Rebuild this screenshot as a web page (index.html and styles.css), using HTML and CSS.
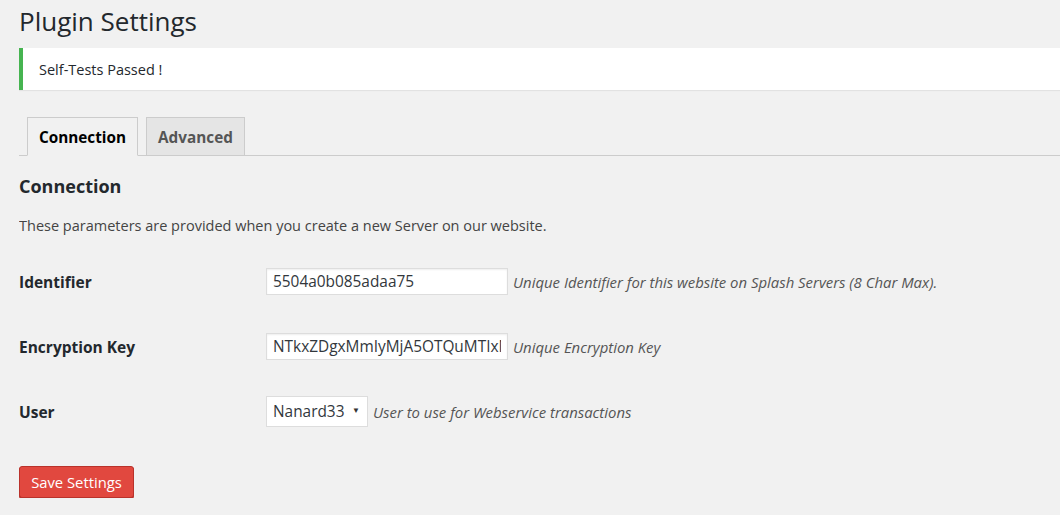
FILE: index.html
```html
<!DOCTYPE html>
<html>
<head>
<meta charset="utf-8">
<link rel="stylesheet" href="styles.css">
</head>
<body>
<div class="wrap">
  <h1 class="page-title">Plugin Settings</h1>
  <div class="notice"><p>Self-Tests Passed !</p></div>
  <nav class="tabs">
    <a class="tab active">Connection</a>
    <a class="tab">Advanced</a>
  </nav>
  <h2 class="section-title">Connection</h2>
  <p class="intro">These parameters are provided when you create a new Server on our website.</p>
  <div class="form">
    <div class="row">
      <div class="label">Identifier</div>
      <div class="field">
        <input class="text" type="text" value="5504a0b085adaa75">
        <span class="desc">Unique Identifier for this website on Splash Servers (8 Char Max).</span>
      </div>
    </div>
    <div class="row">
      <div class="label">Encryption Key</div>
      <div class="field">
        <input class="text" type="text" value="NTkxZDgxMmIyMjA5OTQuMTIxNzk1MzQ=">
        <span class="desc">Unique Encryption Key</span>
      </div>
    </div>
    <div class="row">
      <div class="label">User</div>
      <div class="field">
        <div class="select"><span>Nanard33</span><span class="arrow">▼</span></div>
        <span class="desc">User to use for Webservice transactions</span>
      </div>
    </div>
  </div>
  <button class="save">Save Settings</button>
</div>
</body>
</html>
```
FILE: styles.css
```css
html, body {
  margin: 0;
  padding: 0;
  background: #f1f1f1;
}
body {
  font-family: "Open Sans", "Noto Sans", sans-serif;
  color: #23282d;
  font-size: 14px;
}
.wrap {
  margin-left: 19px;
  overflow: hidden;
}
.page-title {
  margin: 0;
  padding: 6px 0 0;
  font-size: 26px;
  line-height: 30px;
  font-weight: 400;
  color: #23282d;
}
.notice {
  margin-top: 12px;
  background: #fff;
  border-left: 4px solid #46b450;
  box-shadow: 0 1px 1px rgba(0,0,0,0.06);
  padding: 12px 16px 10px;
}
.notice p {
  margin: 0;
  font-size: 14.5px;
  line-height: 20px;
}
.tabs {
  margin-top: 27px;
  display: flex;
  gap: 8px;
  padding-left: 8px;
  border-bottom: 1px solid #ccc;
  height: 38px;
}
.tab {
  display: block;
  box-sizing: border-box;
  height: 39px;
  padding: 0 11px;
  border: 1px solid #ccc;
  background: #e5e5e5;
  color: #555;
  font-weight: 700;
  font-size: 15.3px;
  line-height: 39px;
}
.tab.active {
  background: #f1f1f1;
  color: #000;
  border-bottom-color: #f1f1f1;
}
.section-title {
  margin: 18px 0 0;
  font-size: 18px;
  line-height: 24px;
  font-weight: 700;
  color: #23282d;
}
.intro {
  margin: 18px 0 0;
  font-size: 14.5px;
  line-height: 20px;
  color: #444;
}
.form {
  margin-top: 32px;
  display: flex;
  flex-direction: column;
  gap: 39px;
}
.row {
  display: grid;
  grid-template-columns: 247px auto;
  align-items: center;
  height: 26px;
}
.row:last-child {
  height: 30px;
  margin-top: -2px;
}
.label {
  font-weight: 700;
  font-size: 15.5px;
  color: #23282d;
}
.field {
  display: flex;
  align-items: center;
  gap: 5px;
}
.text {
  box-sizing: border-box;
  width: 242px;
  height: 27px;
  margin: 0;
  padding: 0 6px;
  border: 1px solid #ddd;
  box-shadow: inset 0 1px 2px rgba(0,0,0,0.07);
  background: #fff;
  font-family: inherit;
  font-size: 15.4px;
  color: #32373c;
  outline: none;
}
.select {
  box-sizing: border-box;
  height: 31px;
  width: 102px;
  border: 1px solid #ddd;
  background: #fff;
  display: flex;
  align-items: center;
  justify-content: space-between;
  padding: 0 7px 0 6px;
  font-size: 15.4px;
  color: #32373c;
}
.arrow {
  font-size: 8px;
  color: #333;
  margin-top: -4px;
}
.desc {
  font-style: italic;
  font-size: 14.9px;
  color: #555;
}
.save {
  margin-top: 40px;
  box-sizing: border-box;
  width: 115px;
  height: 32px;
  background: #e1483f;
  border: 1px solid #b9322b;
  border-radius: 3px;
  color: #fff;
  font-family: inherit;
  font-size: 14.8px;
  padding: 0;
  box-shadow: 0 1px 0 #b9322b;
}
```
